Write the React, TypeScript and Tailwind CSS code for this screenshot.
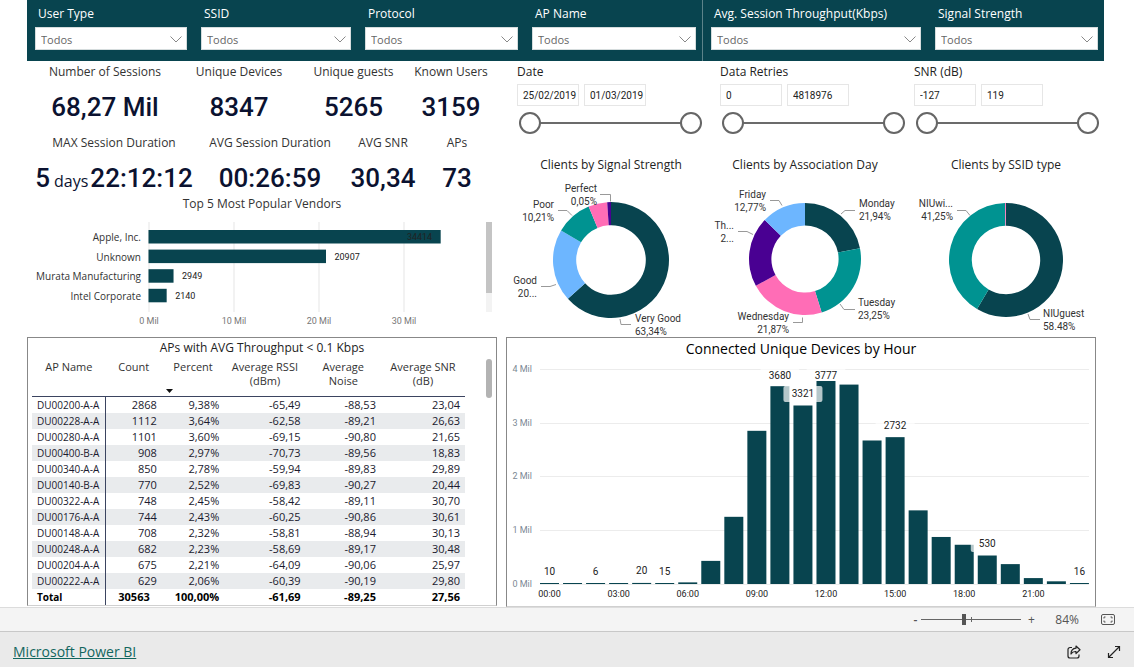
import React from 'react';

const filters = ['User Type', 'SSID', 'Protocol', 'AP Name', 'Avg. Session Throughput(Kbps)', 'Signal Strength'];

function Filter({ label, divided }: { label: string; divided: boolean }) {
  const id = 'filter-' + label.replace(/\W+/g, '-').toLowerCase();
  return (
    <div className={`pt-1.5 pr-1.5 pb-[11px] pl-2 ${divided ? 'border-l border-[#5c838a]' : ''}`}>
      <label htmlFor={id} className="block truncate pl-[3px] text-[12px] leading-4 font-medium text-white">
        {label}
      </label>
      <div className="relative mt-[5px]">
        <select
          id={id}
          className="block h-[23px] w-full appearance-none rounded-none border border-[#d5dcdd] bg-white pt-[3px] pr-6 pl-[5px] text-[11px] text-[#666]"
        >
          <option>Todos</option>
        </select>
        <svg className="pointer-events-none absolute top-[9px] right-[5px]" width="12" height="7" viewBox="0 0 12 7" fill="none" stroke="#888">
          <path d="M.5.5 6 6 11.5.5" />
        </svg>
      </div>
    </div>
  );
}

function Kpi({ label, children }: { label: string; children: React.ReactNode }) {
  return (
    <div className="text-center whitespace-nowrap">
      <h2 className="text-[12px] leading-[22px] text-[#333]">{label}</h2>
      <p className="mt-[7px] h-[34px] font-['Roboto',sans-serif] text-[26px] leading-[34px] font-medium text-[#0b1230]">{children}</p>
    </div>
  );
}

const vendors = [
  { name: 'Apple, Inc.', value: 34414, inside: true },
  { name: 'Unknown', value: 20907 },
  { name: 'Murata Manufacturing', value: 2949 },
  { name: 'Intel Corporate', value: 2140 },
];

function VendorChart() {
  return (
    <section>
      <h2 className="text-center text-[12px] leading-[17px] text-[#333]">Top 5 Most Popular Vendors</h2>
      <svg viewBox="0 0 470 124" className="block w-full" role="img" aria-label="Top 5 Most Popular Vendors">
        {[0, 10, 20, 30].map((t) => (
          <g key={t}>
            <rect x={121 + t * 8.5} y="10" width="2" height="90" fill="#f2f2f2" />
            <text x={122 + t * 8.5} y="112" textAnchor="middle" className="fill-[#777] font-['Roboto',sans-serif] text-[9px]">
              {t} Mil
            </text>
          </g>
        ))}
        {vendors.map((v, i) => {
          const w = v.value * 0.00849;
          const y = 18 + i * 19.6;
          return (
            <g key={v.name}>
              <rect x="121.500" y={y} width={w} height="13.500" fill="#08444f" />
              <text x="114" y={y + 11} textAnchor="end" className="fill-[#333] text-[10px]">
                {v.name}
              </text>
              <text
                x={121 + w + (v.inside ? -8 : 9)}
                y={y + 10}
                textAnchor={v.inside ? 'end' : 'start'}
                className="fill-[#222] font-['Roboto',sans-serif] text-[9px]"
              >
                {v.value}
              </text>
            </g>
          );
        })}
        <rect x="459" y="10" width="6" height="90" fill="#f3f3f3" />
        <rect x="459" y="10" width="6" height="71" fill="#c4c4c4" />
      </svg>
    </section>
  );
}

const rows = [
  ['DU00200-A-A', '2868', '9,38%', '-65,49', '-88,53', '23,04'],
  ['DU00228-A-A', '1112', '3,64%', '-62,58', '-89,21', '26,63'],
  ['DU00280-A-A', '1101', '3,60%', '-69,15', '-90,80', '21,65'],
  ['DU00400-B-A', '908', '2,97%', '-70,73', '-89,56', '18,83'],
  ['DU00340-A-A', '850', '2,78%', '-59,94', '-89,83', '29,89'],
  ['DU00140-B-A', '770', '2,52%', '-69,83', '-90,27', '20,44'],
  ['DU00322-A-A', '748', '2,45%', '-58,42', '-89,11', '30,70'],
  ['DU00176-A-A', '744', '2,43%', '-60,25', '-90,86', '30,61'],
  ['DU00148-A-A', '708', '2,32%', '-58,81', '-88,94', '30,13'],
  ['DU00248-A-A', '682', '2,23%', '-58,69', '-89,17', '30,48'],
  ['DU00204-A-A', '675', '2,21%', '-64,09', '-90,06', '25,97'],
  ['DU00222-A-A', '629', '2,06%', '-60,39', '-90,19', '29,80'],
];

function ApTable() {
  return (
    <section className="border border-[#888] border-b-[#d0d0d0]">
      <h2 className="text-center text-[12px] leading-[19px] text-[#222]">APs with AVG Throughput &lt; 0.1 Kbps</h2>
      <div className="flex pl-1">
        <table className="min-w-0 flex-1 table-fixed border-collapse text-[11px] leading-4 text-[#1a1a2e]">
          <colgroup>
            <col className="w-[17%]" />
            <col className="w-[13%]" />
            <col className="w-[14.4%]" />
            <col className="w-[18.8%]" />
            <col className="w-[17.4%]" />
            <col className="w-[19.4%]" />
          </colgroup>
          <thead>
            <tr className="h-[39px] border-b border-[#3b4460] align-top leading-[14px] text-[#333]">
              <th className="pt-[3px] font-normal">AP Name</th>
              <th className="pt-[3px] font-normal">Count</th>
              <th className="relative pt-[3px] font-normal">
                Percent
                <svg className="absolute bottom-[3px] left-1" width="7" height="4" viewBox="0 0 7 4">
                  <path d="M0 0h7L3.500 4z" fill="#111" />
                </svg>
              </th>
              <th className="pt-[3px] font-normal">Average RSSI (dBm)</th>
              <th className="pt-[3px] font-normal">Average<br />Noise</th>
              <th className="pt-[3px] font-normal">Average SNR<br />(dB)</th>
            </tr>
          </thead>
          <tbody>
            {rows.map((r) => (
              <tr key={r[0]} className="even:bg-[#e9ebed]">
                {r.map((c, i) =>
                  i === 0 ? (
                    <th key={i} scope="row" className="border-r border-[#3b4460] p-0 pl-[5px] text-left text-[10px] leading-4 font-normal whitespace-nowrap">
                      {c}
                    </th>
                  ) : (
                    <td key={i} className="p-0 pr-[5px] text-right">{c}</td>
                  ),
                )}
              </tr>
            ))}
          </tbody>
          <tfoot>
            <tr className="font-bold text-black">
              <th scope="row" className="border-r border-[#3b4460] p-0 pl-[5px] text-left text-[10px] leading-4">Total</th>
              <td className="p-0 text-center">30563</td>
              <td className="p-0 pr-[5px] text-right">100,00%</td>
              <td className="p-0 pr-[5px] text-right">-61,69</td>
              <td className="p-0 pr-[5px] text-right">-89,25</td>
              <td className="p-0 pr-[5px] text-right">27,56</td>
            </tr>
          </tfoot>
        </table>
        <div className="w-[31px] pt-[2px] pl-[21px]">
          <div className="h-[39px] w-[6px] rounded-full bg-[#b3b3b3]" />
        </div>
      </div>
    </section>
  );
}

const thumb =
  'pointer-events-none absolute inset-0 m-0 h-[22px] w-full appearance-none bg-transparent [&::-webkit-slider-thumb]:pointer-events-auto [&::-webkit-slider-thumb]:size-[22px] [&::-webkit-slider-thumb]:appearance-none [&::-webkit-slider-thumb]:rounded-full [&::-webkit-slider-thumb]:border-2 [&::-webkit-slider-thumb]:border-[#666] [&::-webkit-slider-thumb]:bg-white';

function RangeFilter({ label, from, to }: { label: string; from: string; to: string }) {
  const box = "h-[22px] w-[62px] border border-[#e6e6e6] pr-0 pl-[5px] font-['Roboto',sans-serif] text-[10px] text-[#222]";
  return (
    <fieldset className="min-w-0 pl-[11px]">
      <legend className="text-[12px] leading-[22px] text-[#222]">{label}</legend>
      <div className="mt-px flex gap-[5px]">
        <input aria-label={`${label} from`} defaultValue={from} className={box} />
        <input aria-label={`${label} to`} defaultValue={to} className={box} />
      </div>
      <div className="relative mt-[6px] ml-[2px] flex h-[22px] w-[183px] items-center">
        <div className="h-[2px] w-full bg-[#6b6b6b]" />
        <input type="range" aria-label={`${label} minimum`} min="0" max="100" defaultValue="0" className={thumb} />
        <input type="range" aria-label={`${label} maximum`} min="0" max="100" defaultValue="100" className={thumb} />
      </div>
    </fieldset>
  );
}

type DonutLabel = { x: number; y: number; end?: boolean; lines: [string, string]; leader: string };
type DonutProps = {
  title: string;
  width: number;
  cx: number;
  cy: number;
  r: number;
  slices: [number, string][];
  labels: DonutLabel[];
};

function ring(cx: number, cy: number, outer: number, inner: number, a: number, b: number) {
  const p = (rad: number, t: number) =>
    `${(cx + rad * Math.sin(t * 2 * Math.PI)).toFixed(2)} ${(cy - rad * Math.cos(t * 2 * Math.PI)).toFixed(2)}`;
  const large = b - a > 0.5 ? 1 : 0;
  return `M${p(outer, a)}A${outer} ${outer} 0 ${large} 1 ${p(outer, b)}L${p(inner, b)}A${inner} ${inner} 0 ${large} 0 ${p(inner, a)}Z`;
}

function Donut({ title, width, cx, cy, r, slices, labels }: DonutProps) {
  let acc = 0;
  return (
    <svg viewBox={`0 0 ${width} 187`} className="block w-full overflow-visible" role="img" aria-label={title}>
      <text x={cx} y="19" textAnchor="middle" className="fill-[#222] text-[12px]">
        {title}
      </text>
      {slices.map(([share, color], i) => {
        const start = acc;
        acc += share / 100;
        return <path key={i} d={ring(cx, cy, r, r * 0.6, start, Math.min(acc, 1))} fill={color} />;
      })}
      {labels.map((l) => (
        <g key={l.lines[0]}>
          <path d={l.leader} fill="none" stroke="#999" />
          <text x={l.x} y={l.y} textAnchor={l.end ? 'end' : 'start'} className="fill-[#333] font-['Roboto',sans-serif] text-[10px]">
            <tspan x={l.x}>{l.lines[0]}</tspan>
            <tspan x={l.x} dy="13">{l.lines[1]}</tspan>
          </text>
        </g>
      ))}
    </svg>
  );
}

const dark = '#08444f';
const teal = '#009391';
const pink = '#ff6db6';
const purple = '#490092';
const blue = '#6db6ff';

const donuts: DonutProps[] = [
  {
    title: 'Clients by Signal Strength',
    width: 203, cx: 105, cy: 110, r: 58,
    slices: [[63.34, dark], [20.15, blue], [10.21, teal], [5.25, pink], [1.05, purple]],
    labels: [
      { x: 91, y: 42, end: true, lines: ['Perfect', '0,05%'], leader: 'M94 44.500h10.500v7' },
      { x: 48, y: 58, end: true, lines: ['Poor', '10,21%'], leader: 'M52 60.500h9l5 5' },
      { x: 31, y: 134, end: true, lines: ['Good', '20...'], leader: 'M35 136.500h9l6-2' },
      { x: 129, y: 172, lines: ['Very Good', '63,34%'], leader: 'M114 169l1 5.500h10' },
    ],
  },
  {
    title: 'Clients by Association Day',
    width: 194, cx: 96, cy: 109, r: 56,
    slices: [[21.94, dark], [23.25, teal], [21.87, pink], [20.17, purple], [12.77, blue]],
    labels: [
      { x: 57, y: 48, end: true, lines: ['Friday', '12,77%'], leader: 'M61 50.500h9l3 5' },
      { x: 25, y: 79, end: true, lines: ['Th...', '2...'], leader: 'M29 81.500h9l6 3' },
      { x: 80, y: 170, end: true, lines: ['Wednesday', '21,87%'], leader: 'M84 172.500h9.500v-5' },
      { x: 150, y: 57, lines: ['Monday', '21,94%'], leader: 'M132 64l4-3.500h10' },
      { x: 149, y: 156, lines: ['Tuesday', '23,25%'], leader: 'M131 154l4 5.500h11' },
    ],
  },
  {
    title: 'Clients by SSID type',
    width: 201, cx: 103, cy: 110, r: 57,
    slices: [[58.48, dark], [41.25, teal], [0.27, pink]],
    labels: [
      { x: 50, y: 57, end: true, lines: ['NIUwi...', '41,25%'], leader: 'M54 60.500h9l4 5' },
      { x: 140, y: 167, lines: ['NIUguest', '58.48%'], leader: 'M125 164l2 5.500h10' },
    ],
  },
];

const hourly = [10, 4, 6, 5, 20, 15, 30, 430, 1250, 2850, 3680, 3321, 3777, 3710, 2670, 2732, 1370, 875, 730, 530, 370, 110, 50, 16];
const labelled = [0, 2, 4, 5, 10, 11, 12, 15, 19, 23];

function HourChart() {
  const barTop = (v: number) => 224 - Math.max(v * 0.05375, 1);
  return (
    <section className="mr-2 border border-[#888] border-b-[#d0d0d0]">
      <h2 className="text-center text-[14px] leading-[22px] text-black">Connected Unique Devices by Hour</h2>
      <svg viewBox="0 0 588 246" className="block w-full" role="img" aria-label="Connected Unique Devices by Hour">
        {[0, 1, 2, 3, 4].map((t) => (
          <g key={t}>
            <path d={`M33 ${224.5 - Math.round(t * 53.75)}h549`} stroke="#ececec" />
            <text x="25" y={227 - Math.round(t * 53.75)} textAnchor="end" className="fill-[#7c8894] font-['Roboto',sans-serif] text-[9px]">
              {t} Mil
            </text>
          </g>
        ))}
        {hourly.map((v, i) => (
          <rect key={i} x={33 + i * 23.04} y={barTop(v)} width="19" height={224 - barTop(v)} fill="#08444f" />
        ))}
        {labelled.map((i) => {
          const v = hourly[i];
          const cx = 42.5 + i * 23.04;
          const cy = Math.max(barTop(v) - 11.5, 16);
          const w = String(v).length * 6 + 15;
          const h = Math.min(16, barTop(v) - cy + 8);
          return (
            <g key={i}>
              <rect x={cx - w / 2} y={cy - 8} width={w} height={h} rx="2" fill="#fff" opacity="0.7" />
              <text x={cx} y={cy + 3} textAnchor="middle" className="fill-[#222] font-['Roboto',sans-serif] text-[10px]">
                {v}
              </text>
            </g>
          );
        })}
        {[0, 3, 6, 9, 12, 15, 18, 21].map((h) => (
          <text key={h} x={42.5 + h * 23.04} y="237" textAnchor="middle" className="fill-[#222] font-['Roboto',sans-serif] text-[9px]">
            {String(h).padStart(2, '0')}:00
          </text>
        ))}
      </svg>
    </section>
  );
}

export default function App() {
  return (
    <div className="flex min-h-screen flex-col bg-white font-['Open_Sans','Noto_Sans',sans-serif]">
      <main className="flex-1 pr-[30px] pl-[27px]">
        <header className="grid grid-cols-[166fr_164fr_167fr_178fr_225fr_177fr] bg-[#08444f]">
          {filters.map((f, i) => (
            <Filter key={f} label={f} divided={i === 4} />
          ))}
        </header>
        <div className="grid grid-cols-[470fr_598fr] items-start gap-x-[9px]">
          <div className="min-w-0">
            <div className="grid grid-cols-[156fr_112fr_117fr_78fr_7fr]">
              <Kpi label="Number of Sessions">68,27 Mil</Kpi>
              <Kpi label="Unique Devices">8347</Kpi>
              <Kpi label="Unique guests">5265</Kpi>
              <Kpi label="Known Users">3159</Kpi>
            </div>
            <div className="mt-2 grid grid-cols-[174fr_138fr_88fr_60fr_10fr]">
              <Kpi label="MAX Session Duration">
                5<span className="ml-1 font-['Open_Sans',sans-serif] text-[16px] leading-none font-normal">days</span>
                <span className="ml-[2px]">22:12:12</span>
              </Kpi>
              <Kpi label="AVG Session Duration">00:26:59</Kpi>
              <Kpi label="AVG SNR">30,34</Kpi>
              <Kpi label="APs">73</Kpi>
            </div>
            <VendorChart />
            <div className="pt-px">
              <ApTable />
            </div>
          </div>
          <div className="min-w-0">
            <div className="grid grid-cols-[203fr_194fr_201fr]">
              <RangeFilter label="Date" from="25/02/2019" to="01/03/2019" />
              <RangeFilter label="Data Retries" from="0" to="4818976" />
              <RangeFilter label="SNR (dB)" from="-127" to="119" />
            </div>
            <div className="mt-4 grid grid-cols-[203fr_194fr_201fr]">
              {donuts.map((d) => (
                <Donut key={d.title} {...d} />
              ))}
            </div>
            <HourChart />
          </div>
        </div>
      </main>
      <div className="flex h-6 items-center justify-end border-t border-[#dcdcdc] bg-[#f4f4f4] pr-[19px] text-[12px] text-[#555]">
        <button type="button" aria-label="Zoom out" className="w-3 text-center leading-4 font-semibold">-</button>
        <div className="relative flex h-3 w-[100px] items-center">
          <div className="h-px w-full bg-[#666]" />
          <div className="absolute left-1/2 h-[5px] w-px bg-[#666]" />
          <input
            type="range"
            aria-label="Zoom level"
            min="0"
            max="100"
            defaultValue="42"
            className="absolute inset-0 m-0 h-3 w-full appearance-none bg-transparent [&::-webkit-slider-thumb]:h-[11px] [&::-webkit-slider-thumb]:w-1 [&::-webkit-slider-thumb]:appearance-none [&::-webkit-slider-thumb]:bg-[#555]"
          />
        </div>
        <button type="button" aria-label="Zoom in" className="w-5 text-center leading-4">+</button>
        <span className="mr-[22px] ml-[14px]">84%</span>
        <button type="button" aria-label="Fit to page">
          <svg width="14" height="11" viewBox="0 0 14 11" fill="none" stroke="#555">
            <rect x=".5" y=".5" width="13" height="10" rx="1.500" />
            <path d="M3 4.500v-1.500h1.500M9.500 3H11v1.500M11 6.500V8H9.500M4.500 8H3V6.500" />
          </svg>
        </button>
      </div>
      <footer className="flex h-[37px] items-center justify-between border-t border-[#c8c8c8] bg-[#eaeaea] pt-1 pr-[13px] pl-[13px]">
        <a href="#power-bi" className="text-[14px] leading-5 text-[#12665e] underline">Microsoft Power BI</a>
        <div className="flex items-center gap-[26px]">
          <button type="button" aria-label="Share">
            <svg width="14" height="14" viewBox="0 0 14 14" fill="none" stroke="#222" strokeWidth="1.200" strokeLinejoin="round">
              <path d="M5 2.500H3a2 2 0 0 0-2 2V11a2 2 0 0 0 2 2h7a2 2 0 0 0 2-2v-1.500" />
              <path d="M9 1l4 3.800-4 3.800V6.500C6.500 6.300 5 7.300 4 9c0-3 2-5.500 5-5.800z" />
            </svg>
          </button>
          <button type="button" aria-label="Full screen">
            <svg width="14" height="14" viewBox="0 0 14 14" fill="none" stroke="#222" strokeWidth="1.200">
              <path d="M1.500 12.500l11-11M8 1.500h4.500V6M1.500 8v4.500H6" />
            </svg>
          </button>
        </div>
      </footer>
    </div>
  );
}
